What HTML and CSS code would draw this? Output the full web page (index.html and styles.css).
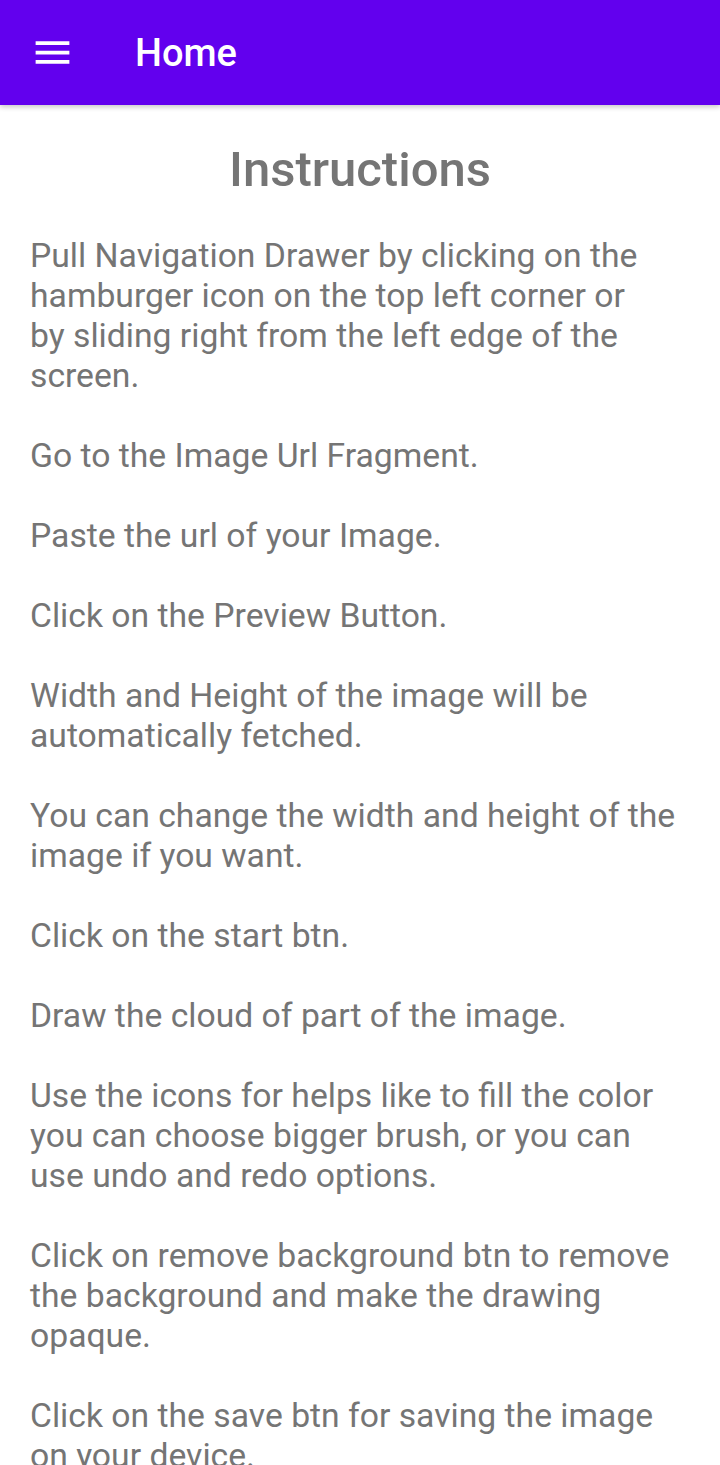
FILE: index.html
```html
<!DOCTYPE html>
<html>
<head>
<meta charset="utf-8">
<link rel="stylesheet" href="styles.css">
</head>
<body>
<header class="appbar">
  <svg class="menu" viewBox="0 0 24 24" width="45" height="45"><path fill="#fff" d="M3 18h18v-2H3v2zm0-5h18v-2H3v2zm0-7v2h18V6H3z"/></svg>
  <div class="title">Home</div>
</header>
<main class="content">
  <h1 class="heading">Instructions</h1>
  <p>Pull Navigation Drawer by clicking on the<br>hamburger icon on the top left corner or<br>by sliding right from the left edge of the<br>screen.</p>
  <p>Go to the Image Url Fragment.</p>
  <p>Paste the url of your Image.</p>
  <p>Click on the Preview Button.</p>
  <p>Width and Height of the image will be<br>automatically fetched.</p>
  <p>You can change the width and height of the<br>image if you want.</p>
  <p>Click on the start btn.</p>
  <p>Draw the cloud of part of the image.</p>
  <p>Use the icons for helps like to fill the color<br>you can choose bigger brush, or you can<br>use undo and redo options.</p>
  <p>Click on remove background btn to remove<br>the background and make the drawing<br>opaque.</p>
  <p>Click on the save btn for saving the image<br>on your device.</p>
</main>
</body>
</html>
```

FILE: styles.css
```css
html, body {
  margin: 0;
  padding: 0;
  background: #ffffff;
  font-family: Roboto, "Noto Sans", sans-serif;
}
.appbar {
  height: 105px;
  background: #6200ee;
  display: flex;
  align-items: center;
  padding-left: 30px;
  box-shadow: 0 2px 5px rgba(0, 0, 0, 0.22);
  position: relative;
  z-index: 1;
}
.menu {
  display: block;
  width: 45px;
  height: 45px;
}
.title {
  margin-left: 60px;
  padding-top: 2px;
  color: #ffffff;
  font-size: 38px;
  font-weight: 500;
  line-height: 45px;
}
.content {
  padding: 36px 10px 0 30px;
  color: #757575;
}
.heading {
  margin: 0 0 38px 0;
  text-align: center;
  padding-right: 20px;
  font-size: 49px;
  font-weight: 500;
  line-height: 57px;
}
.content p {
  margin: 0 0 40px 0;
  font-size: 33.7px;
  line-height: 40px;
  white-space: nowrap;
}
```
